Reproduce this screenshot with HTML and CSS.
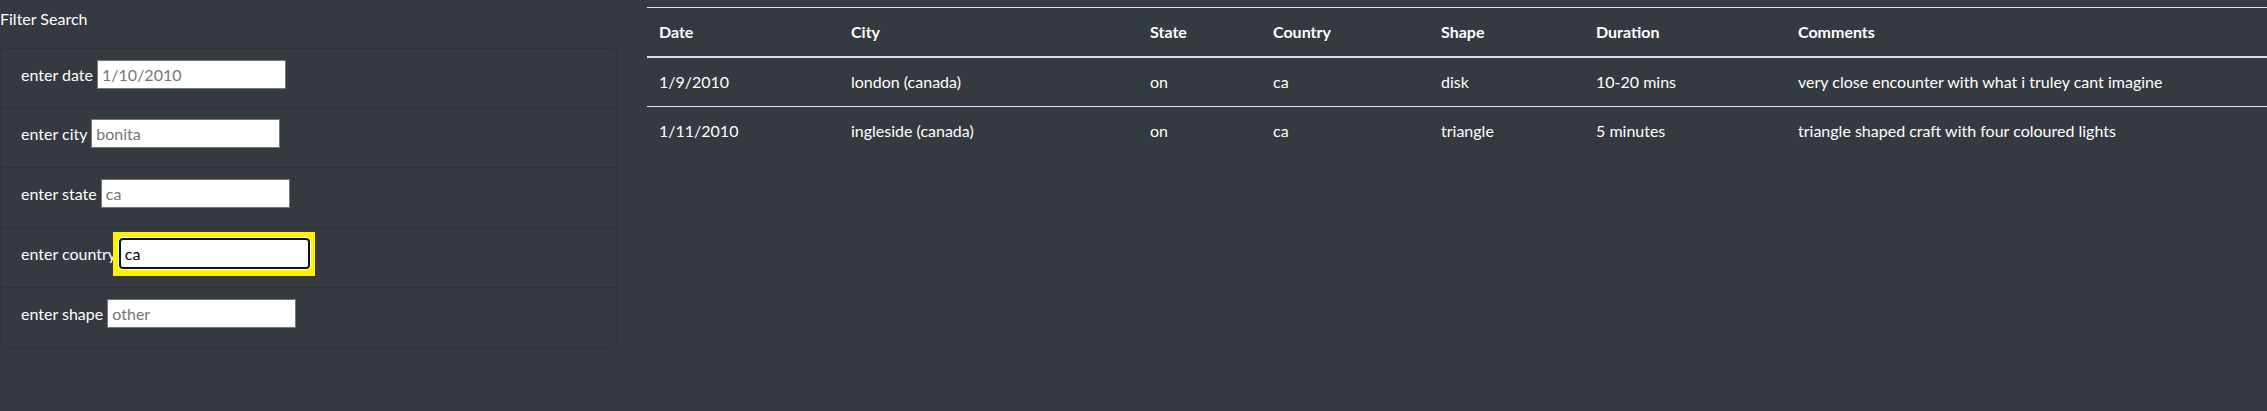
FILE: index.html
```html
<!DOCTYPE html>
<html lang="en">
<head>
<meta charset="utf-8">
<title>UFO Sightings</title>
<link rel="stylesheet" href="styles.css">
</head>
<body>
<div class="page">
  <aside class="sidebar">
    <div class="filter-title">Filter Search</div>
    <ul class="filters">
      <li class="filter-item"><label for="datetime">enter date</label> <input id="datetime" class="filter-input" type="text" placeholder="1/10/2010"></li>
      <li class="filter-item"><label for="city">enter city</label> <input id="city" class="filter-input" type="text" placeholder="bonita"></li>
      <li class="filter-item"><label for="state">enter state</label> <input id="state" class="filter-input" type="text" placeholder="ca"></li>
      <li class="filter-item"><label for="country">enter country</label> <span class="focus-ring"><input id="country" class="filter-input is-focused" type="text" value="ca"></span></li>
      <li class="filter-item"><label for="shape">enter shape</label> <input id="shape" class="filter-input" type="text" placeholder="other"></li>
    </ul>
  </aside>
  <main class="content">
    <table class="ufo-table">
      <colgroup>
        <col class="c-date"><col class="c-city"><col class="c-state"><col class="c-country"><col class="c-shape"><col class="c-duration"><col class="c-comments">
      </colgroup>
      <thead>
        <tr><th>Date</th><th>City</th><th>State</th><th>Country</th><th>Shape</th><th>Duration</th><th>Comments</th></tr>
      </thead>
      <tbody>
        <tr><td>1/9/2010</td><td>london (canada)</td><td>on</td><td>ca</td><td>disk</td><td>10-20 mins</td><td>very close encounter with what i truley cant imagine</td></tr>
        <tr><td>1/11/2010</td><td>ingleside (canada)</td><td>on</td><td>ca</td><td>triangle</td><td>5 minutes</td><td>triangle shaped craft with four coloured lights</td></tr>
      </tbody>
    </table>
  </main>
</div>
</body>
</html>
```

FILE: styles.css
```css
html, body {
  margin: 0;
  padding: 0;
  background: #343a40;
}
body {
  min-height: 411px;
  font-family: "Lato", "Noto Sans", sans-serif;
  font-size: 16px;
  line-height: 24px;
  color: #fff;
}
.page {
  display: flex;
  gap: 30px;
  align-items: flex-start;
}
.sidebar {
  width: 617px;
  flex: none;
  padding-top: 7px;
}
.filter-title {
  line-height: 24px;
  margin-bottom: 17px;
}
.filters {
  list-style: none;
  margin: 0;
  padding: 0;
  border: 1px solid #2e3338;
  border-radius: 4px;
}
.filter-item {
  height: 59px;
  box-sizing: border-box;
  padding: 11px 20px 0;
  white-space: nowrap;
}
.filter-item:first-child {
  height: 58px;
}
.filter-item + .filter-item {
  border-top: 1px solid #2e3338;
  height: 60px;
}
.filter-input {
  width: 189px;
  height: 29px;
  box-sizing: border-box;
  border: 1px solid #767676;
  padding: 0 4px;
  margin: 0;
  background: #fff;
  font-family: "Lato", "Noto Sans", sans-serif;
  font-size: 16px;
  color: #000;
  vertical-align: baseline;
}
.filter-input::placeholder {
  color: #757575;
  opacity: 1;
}
.focus-ring {
  position: relative;
  display: inline-block;
}
.focus-ring::before {
  content: "";
  position: absolute;
  left: -7px;
  right: -6px;
  top: -7px;
  bottom: -8px;
  background: #fff200;
}
.filter-input.is-focused {
  position: relative;
  border-color: #111;
  border-radius: 3px;
  outline: none;
  box-shadow: 0 0 0 1px #111, 0 0 0 2px #fff;
}
.content {
  flex: 1;
  min-width: 0;
}
.ufo-table {
  width: 1620px;
  margin-top: 7px;
  border-collapse: collapse;
  table-layout: fixed;
  color: #fff;
}
.c-date { width: 192px; }
.c-city { width: 299px; }
.c-state { width: 123px; }
.c-country { width: 168px; }
.c-shape { width: 155px; }
.c-duration { width: 202px; }
.c-comments { width: 481px; }
.ufo-table th,
.ufo-table td {
  padding: 12px;
  text-align: left;
  vertical-align: top;
  border-top: 1px solid #dee2e6;
  white-space: nowrap;
}
.ufo-table th {
  font-weight: 700;
  border-bottom: 2px solid #dee2e6;
}
.ufo-table thead + tbody tr:first-child td {
  border-top: none;
}
```
